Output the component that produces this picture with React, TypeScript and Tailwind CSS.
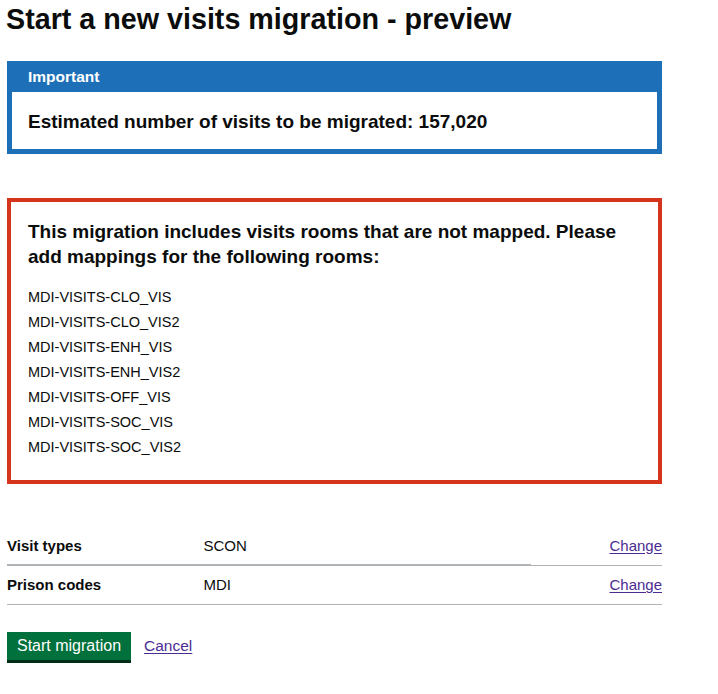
import React from "react";

const rooms = [
  "MDI-VISITS-CLO_VIS",
  "MDI-VISITS-CLO_VIS2",
  "MDI-VISITS-ENH_VIS",
  "MDI-VISITS-ENH_VIS2",
  "MDI-VISITS-OFF_VIS",
  "MDI-VISITS-SOC_VIS",
  "MDI-VISITS-SOC_VIS2",
];

export default function App() {
  return (
    <div
      className="min-h-[694px] w-full bg-white text-[#0b0c0c]"
      style={{ fontFamily: '"Liberation Sans", Arial, sans-serif' }}
    >
      <div className="w-[655px] ml-[7px]">
        <h1 className="pt-[2px] text-[28.7px] font-bold leading-[35px] mb-[24px] -ml-[1px]">
          Start a new visits migration - preview
        </h1>

        <div className="border-[5px] border-[#1d70b8] border-t-0">
          <div className="bg-[#1d70b8] pt-[6px] pb-[5px] pl-[16px] text-white text-[15.5px] font-bold leading-[20px]">
            Important
          </div>
          <div className="pt-[17px] pb-[15px] pl-[16px] text-[19px] font-bold leading-[25px]">
            Estimated number of visits to be migrated: 157,020
          </div>
        </div>

        <div className="mt-[44px] border-[4px] border-[#d4351c] pt-[17px] pb-[20px] pl-[17px] pr-[17px]">
          <h2 className="text-[19px] font-bold leading-[25px]">
            This migration includes visits rooms that are not mapped. Please add mappings for the following rooms:
          </h2>
          <div className="mt-[16px]">
            {rooms.map((r) => (
              <p key={r} className="text-[14.5px] leading-[25px]">
                {r}
              </p>
            ))}
          </div>
        </div>

        <div className="mt-[43px] text-[15px] leading-[20px]">
          <div className="border-b border-[#b1b4b6]">
            <div className="grid grid-cols-[30%_50%_20%] h-[37px] items-center">
              <div className="font-bold">Visit types</div>
              <div>SCON</div>
              <div className="text-right">
                <a href="#" className="text-[#4c2c92] underline underline-offset-[2px]">
                  Change
                </a>
              </div>
            </div>
            <div className="h-px w-[80%] bg-[#b1b4b6]" />
          </div>
          <div className="border-b border-[#b1b4b6]">
            <div className="grid grid-cols-[30%_50%_20%] h-[38px] items-center">
              <div className="font-bold">Prison codes</div>
              <div>MDI</div>
              <div className="text-right">
                <a href="#" className="text-[#4c2c92] underline underline-offset-[2px]">
                  Change
                </a>
              </div>
            </div>
          </div>
        </div>

        <div className="mt-[27px] flex items-center gap-[13px]">
          <button className="h-[28px] px-[10px] bg-[#00703c] text-white text-[16px] leading-[16px] shadow-[0_3px_0_#002d18]">
            Start migration
          </button>
          <a href="#" className="text-[15.5px] text-[#4c2c92] underline underline-offset-[2px] leading-[20px]">
            Cancel
          </a>
        </div>
      </div>
    </div>
  );
}
